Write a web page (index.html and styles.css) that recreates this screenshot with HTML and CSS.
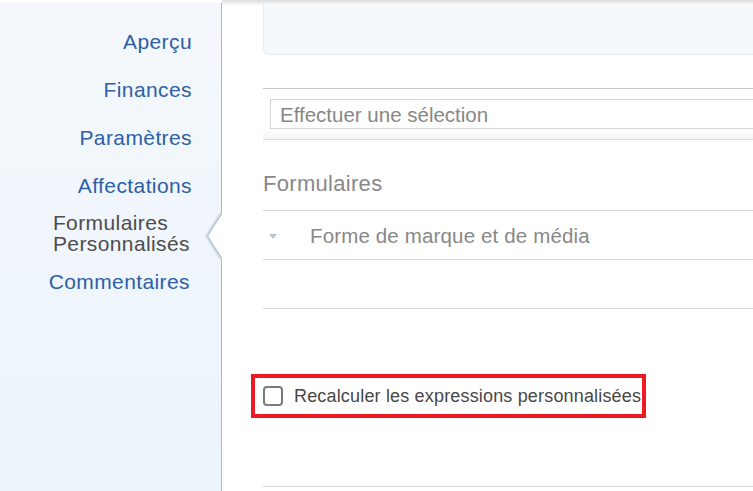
FILE: index.html
```html
<!DOCTYPE html>
<html lang="fr">
<head>
<meta charset="utf-8">
<title>Formulaires personnalisés</title>
<link rel="stylesheet" href="styles.css">
</head>
<body>
<nav class="sidebar">
  <a class="nav-link" href="#">Aperçu</a>
  <a class="nav-link" href="#">Finances</a>
  <a class="nav-link" href="#">Paramètres</a>
  <a class="nav-link" href="#">Affectations</a>
  <span class="nav-active">Formulaires<br>Personnalisés</span>
  <a class="nav-link" href="#">Commentaires</a>
  <svg class="nav-arrow" width="16" height="46" viewBox="0 0 16 46" aria-hidden="true">
    <polygon points="16,0 1.5,23 16,46" fill="#fff"/>
    <polyline points="16,0 1.5,23 16,46" fill="none" stroke="#b4c4d4" stroke-width="1.2"/>
  </svg>
</nav>
<main class="main">
  <div class="top-panel"></div>
  <div class="select-section">
    <div class="select-box">Effectuer une sélection</div>
  </div>
  <h2 class="forms-title">Formulaires</h2>
  <div class="form-row">
    <span class="caret"></span>
    <span class="form-name">Forme de marque et de média</span>
  </div>
  <div class="form-row empty"></div>
  <div class="highlight">
    <span class="checkbox"></span>
    <span class="check-label">Recalculer les expressions personnalisées</span>
  </div>
  <div class="bottom-rule"></div>
</main>
</body>
</html>
```

FILE: styles.css
```css
html, body {
  margin: 0;
  padding: 0;
}
body {
  display: flex;
  height: 491px;
  overflow: hidden;
  font-family: "Liberation Sans", Arial, sans-serif;
  background: #fff;
}
.sidebar {
  position: relative;
  box-sizing: border-box;
  width: 222px;
  flex: 0 0 222px;
  margin-top: 3px;
  padding: 28px 29px 0 0;
  background: linear-gradient(#f4f8fc, #ebf3fb);
  border-right: 1px solid #a8bccf;
  display: flex;
  flex-direction: column;
  align-items: flex-end;
  gap: 27px;
}
.nav-link {
  font-size: 21px;
  line-height: 21px;
  letter-spacing: 0.4px;
  color: #2d5fa6;
  text-decoration: none;
}
.nav-active {
  font-size: 21px;
  line-height: 21px;
  letter-spacing: 0.4px;
  color: #4d4d4d;
  margin: -11px 2px -10px 0;
  text-align: left;
}
.nav-link:last-of-type {
  margin-right: 2px;
}
.nav-arrow {
  position: absolute;
  right: -1px;
  top: 210px;
  filter: drop-shadow(-1px 0 1px rgba(90, 120, 160, 0.35));
}
.main {
  flex: 1;
  min-width: 0;
  padding-left: 41px;
  background: linear-gradient(#dcdcdc, #fff 6px);
}
.top-panel {
  box-sizing: border-box;
  margin-top: 3px;
  height: 52px;
  background: #f5f9fc;
  border-left: 1px solid #e3eef3;
  border-bottom: 1px solid #deebf1;
  border-bottom-left-radius: 7px;
}
.select-section {
  margin-top: 33px;
  padding: 10px 0 10px 7px;
  border-top: 1px solid #cacaca;
  border-bottom: 1px solid #dcdcdc;
  background: linear-gradient(#fff 40px, #f4f4f4);
}
.select-box {
  box-sizing: border-box;
  height: 30px;
  padding: 1px 0 0 9px;
  border: 1px solid #d6d6d6;
  border-right: none;
  background: #fff;
  font-size: 20.5px;
  line-height: 27px;
  color: #878787;
  white-space: nowrap;
}
.forms-title {
  margin: 0;
  padding: 33px 0 15px;
  font-size: 22px;
  line-height: 22px;
  letter-spacing: 0.3px;
  font-weight: normal;
  color: #888;
  border-bottom: 1px solid #d9d9d9;
}
.form-row {
  display: flex;
  align-items: flex-start;
  height: 49px;
  box-sizing: border-box;
  padding-top: 14px;
  border-bottom: 1px solid #d9d9d9;
}
.caret {
  width: 0;
  height: 0;
  margin: 9px 33px 0 6px;
  border-left: 4.5px solid transparent;
  border-right: 4.5px solid transparent;
  border-top: 5px solid #b9c4d3;
}
.form-name {
  font-size: 20.5px;
  line-height: 22px;
  letter-spacing: 0.15px;
  color: #888;
  white-space: nowrap;
}
.highlight {
  display: inline-flex;
  align-items: center;
  margin: 65px 0 0 -12px;
  padding: 8px 1px 8px 8px;
  border: 4px solid #ed1c24;
}
.checkbox {
  box-sizing: border-box;
  width: 20px;
  height: 20px;
  border: 2px solid #7a7a7a;
  border-radius: 4px;
  background: #fff;
  margin-right: 11px;
}
.check-label {
  font-size: 18px;
  line-height: 20px;
  letter-spacing: 0.17px;
  color: #474747;
  white-space: nowrap;
}
.bottom-rule {
  margin-top: 68px;
  border-top: 1px solid #dadada;
}
```
